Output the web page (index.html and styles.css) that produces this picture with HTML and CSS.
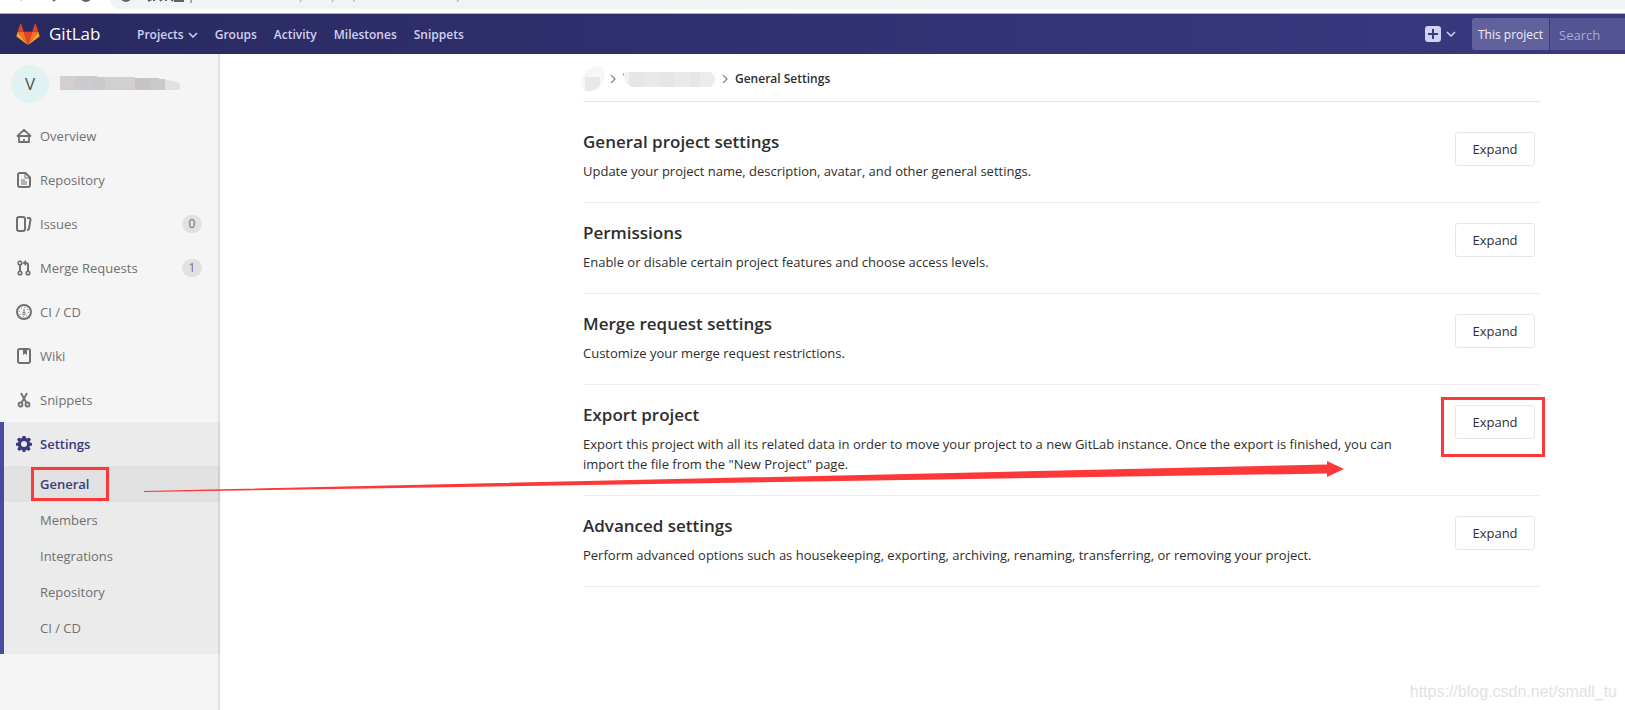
FILE: index.html
```
<!DOCTYPE html>
<html lang="en">
<head>
<meta charset="utf-8">
<title>General Settings · GitLab</title>
<link rel="stylesheet" href="styles.css">
</head>
<body>
<div class="browser-strip" aria-hidden="true">
  <svg class="strip-icons" width="110" height="9" viewBox="0 0 110 9"><path d="M18-4l4 4M53 1l4-3" stroke="#5f6368" stroke-width="2" fill="none"/><circle cx="86" cy="-4" r="5" stroke="#5f6368" stroke-width="2" fill="none"/></svg>
  <div class="address-bar">
    <svg width="400" height="9" viewBox="0 0 400 9" fill="none" stroke="#5f6368"><circle cx="16" cy="-4" r="5" stroke-width="2"/><path d="M38 1l4-2M44-2v3M50 1l3-3M56-2v3M60-2l3 3M64 1h10" stroke-width="2"/><path d="M81-1v4"/><path d="M190 2l2-3M222 2l2-3M244-1v3M347 2l2-3" stroke="#9aa0a6"/></svg>
  </div>
</div>
<header class="navbar">
  <a class="brand" href="#">
    <svg width="24" height="22" viewBox="0 0 36 34"><path fill="#e24329" d="M18 34l6.600-20.400H11.400z"/><path fill="#fc6d26" d="M18 34l-6.600-20.400H2.100z"/><path fill="#fca326" d="M2.100 13.600l-2 6.200a1.400 1.400 0 0 0 .5 1.500L18 34z"/><path fill="#e24329" d="M2.100 13.600h9.300l-4-12.300c-.2-.7-1.100-.7-1.300 0z"/><path fill="#fc6d26" d="M18 34l6.600-20.400h9.300z"/><path fill="#fca326" d="M33.900 13.600l2 6.200a1.400 1.400 0 0 1-.5 1.500L18 34z"/><path fill="#e24329" d="M33.900 13.600h-9.300l4-12.300c.2-.7 1.100-.7 1.300 0z"/></svg>
    <span>GitLab</span>
  </a>
  <nav class="main-nav">
    <a href="#">Projects <svg class="chevron" width="10" height="6" viewBox="0 0 10 6"><path d="M1 1l4 4 4-4"/></svg></a>
    <a href="#">Groups</a>
    <a href="#">Activity</a>
    <a href="#">Milestones</a>
    <a href="#">Snippets</a>
  </nav>
  <button class="new-button" type="button" aria-label="New">
    <svg width="16" height="16" viewBox="0 0 16 16"><rect width="16" height="16" rx="3" fill="#d1d1f0"/><path d="M8 3v10M3 8h10" stroke="#393982" stroke-width="2"/></svg>
    <svg class="chevron" width="10" height="6" viewBox="0 0 10 6"><path d="M1 1l4 4 4-4"/></svg>
  </button>
  <form class="search">
    <label class="search-scope" for="search">This project</label>
    <input id="search" type="text" placeholder="Search">
  </form>
</header>
<div class="layout">
  <aside class="sidebar">
    <a class="project" href="#" aria-label="Project">
      <span class="avatar">V</span>
      <svg width="134" height="24" viewBox="2 0 134 24"><path fill="#f0f4f4" d="M0 4h13v18h30v-4H13z"/><path fill="#d4cfcc" d="M13 4h15v14H13z"/><path fill="#ccccd0" d="M28 4h15v14H28z"/><path fill="#cacaca" d="M43 4h7v1h8v13H43z"/><path fill="#d0d0d0" d="M58 5h30v13H58z"/><path fill="#c8c2c2" d="M88 6h15v12H88z"/><path fill="#c9c9c9" d="M103 6h9v1h6v11h-15z"/><path fill="#e1e1e4" d="M118 8l10 1 5 3v6h-15z"/></svg>
    </a>
    <nav class="side-nav">
      <a href="#"><svg viewBox="0 0 16 16"><path d="M1.500 8L8 1.800 14.500 8zM3 8v6h10V8M8 11v2" fill="none" stroke="currentColor" stroke-width="1.800" stroke-linejoin="round"/></svg>Overview</a>
      <a href="#"><svg viewBox="0 0 16 16"><path d="M4 1h5.500L14 5.500V13a2 2 0 0 1-2 2H4a2 2 0 0 1-2-2V3a2 2 0 0 1 2-2z" fill="none" stroke="currentColor" stroke-width="2"/><path d="M9 1v5h5M5 8h4M5 10h6M5 12h6" fill="none" stroke="currentColor"/></svg>Repository</a>
      <a href="#"><svg viewBox="0 0 16 16"><rect x="1" y="1" width="8" height="14" rx="2" fill="none" stroke="currentColor" stroke-width="2"/><path d="M11 2h2c1 0 1.700.8 1.500 1.800L13 12.500c-.2 1-.8 1.500-2 1.500" fill="none" stroke="currentColor" stroke-width="2"/></svg>Issues<span class="badge">0</span></a>
      <a href="#"><svg viewBox="0 0 16 16" fill="none" stroke="currentColor"><circle cx="4" cy="3" r="1.800" stroke-width="1.600"/><circle cx="4" cy="13" r="1.800" stroke-width="1.600"/><circle cx="12" cy="13" r="1.800" stroke-width="1.600"/><path d="M4 5v6M12 11V5c0-1.500-.6-2-2-2H8.500" stroke-width="2"/><path d="M10 0v6L6.500 3z" fill="currentColor" stroke="none"/></svg>Merge Requests<span class="badge">1</span></a>
      <a href="#"><svg viewBox="0 0 16 16" fill="none" stroke="currentColor"><circle cx="8" cy="8" r="7" stroke-width="2"/><circle cx="8" cy="8" r="4.500" stroke-dasharray="1 2.500"/><path d="M8 5v4"/><circle cx="8" cy="9.500" r="1.300"/></svg>CI / CD</a>
      <a href="#"><svg viewBox="0 0 16 16"><rect x="2" y="1" width="12" height="14" rx="2" fill="none" stroke="currentColor" stroke-width="2"/><path d="M7 1h4v6L9 5.500 7 7z" fill="currentColor"/></svg>Wiki</a>
      <a href="#"><svg viewBox="0 0 16 16" fill="none" stroke="currentColor" stroke-width="1.800"><circle cx="4.500" cy="12.500" r="2"/><circle cx="11.500" cy="12.500" r="2"/><path d="M5 1l5.500 10M11 1L5.500 11"/></svg>Snippets</a>
      <div class="active-group">
        <a class="current" href="#"><svg viewBox="0 0 16 16"><path fill="currentColor" fill-rule="evenodd" d="M6.500 0h3l.4 2.100 1.200.5L13 1.500 15 3.600 13.500 5.400l.4 1.100 2.100.4v2.700l-2.100.5-.5 1.100 1.300 1.800-2.100 2-1.800-1.200-1.100.4L9.300 16H6.700l-.5-1.900-1.100-.4L3.300 15l-2-2 1.200-1.800-.4-1.100L0 9.600V6.900l2.100-.4.400-1.100L1 3.600l2-2.100 1.900 1.100 1.200-.5zM8 5a3 3 0 1 0 0 6 3 3 0 0 0 0-6z"/></svg>Settings</a>
        <div class="sub-nav">
          <a class="selected" href="#"><span>General</span></a>
          <a href="#">Members</a>
          <a href="#">Integrations</a>
          <a href="#">Repository</a>
          <a href="#">CI / CD</a>
        </div>
      </div>
    </nav>
  </aside>
  <main class="content">
    <nav class="breadcrumb" aria-label="Breadcrumb">
      <svg class="group-name" width="20" height="26" viewBox="2 0 20 26"><path fill="#f7f7f7" d="M0 13L6 4 15 0h7l2 5-1 10-6 8-11 3-5-4z"/><path fill="#e7e8e8" d="M4 11h15v9l-8 5H6l-2-2z"/></svg>
      <svg class="sep" width="6" height="8" viewBox="0 0 6 8"><path d="M1 0l4 4-4 4"/></svg>
      <svg width="92" height="16" viewBox="0 0 92 16"><path stroke="#999" d="M0 2l1 3"/><path fill="#f0f2f2" d="M2 1h5v14L3 12 1 7z"/><path fill="#e6e6e7" d="M6 1h15v15H8l-2-2z"/><path fill="#e9e9ec" d="M21 1h15v15H21zM51 1h16v15H51z"/><path fill="#e6e6e6" d="M36 1h15v15H36zM67 1h10v15H67z"/><path fill="#ebecee" d="M77 1h11l4 5v4l-4 6H77z"/></svg>
      <svg class="sep" width="6" height="8" viewBox="0 0 6 8"><path d="M1 0l4 4-4 4"/></svg>
      <strong>General Settings</strong>
    </nav>
    <section class="setting">
      <div class="setting-text"><h4>General project settings</h4><p>Update your project name, description, avatar, and other general settings.</p></div>
      <button class="expand" type="button">Expand</button>
    </section>
    <section class="setting">
      <div class="setting-text"><h4>Permissions</h4><p>Enable or disable certain project features and choose access levels.</p></div>
      <button class="expand" type="button">Expand</button>
    </section>
    <section class="setting">
      <div class="setting-text"><h4>Merge request settings</h4><p>Customize your merge request restrictions.</p></div>
      <button class="expand" type="button">Expand</button>
    </section>
    <section class="setting">
      <div class="setting-text"><h4>Export project</h4><p>Export this project with all its related data in order to move your project to a new GitLab instance. Once the export is finished, you can import the file from the "New Project" page.</p></div>
      <div class="marked"><button class="expand" type="button">Expand</button></div>
    </section>
    <section class="setting">
      <div class="setting-text"><h4>Advanced settings</h4><p>Perform advanced options such as housekeeping, exporting, archiving, renaming, transferring, or removing your project.</p></div>
      <button class="expand" type="button">Expand</button>
    </section>
  </main>
</div>
<svg class="arrow" width="1200" height="32" viewBox="0 0 1200 32" aria-hidden="true"><path fill="#fc3838" d="M0 30L1183 3.500V0l17 8-17 8v-3.500L0 31z"/></svg>
<div class="watermark">https://blog.csdn.net/small_tu</div>
</body>
</html>
```
FILE: styles.css
```
* { box-sizing: border-box; }
body {
  margin: 0;
  min-height: 100vh;
  display: flex;
  flex-direction: column;
  position: relative;
  background: #fff;
  color: #2e2e2e;
  font: 13px/20px "Open Sans", "Noto Sans", sans-serif;
  overflow-x: hidden;
}
a { color: inherit; text-decoration: none; }
button, input { font: inherit; }

.browser-strip {
  display: flex;
  height: 14px;
  border-bottom: 1px solid #b0b0b4;
}
.address-bar {
  flex: 1;
  height: 9px;
  background: #f1f3f4;
  border-bottom-left-radius: 12px;
}
.address-bar svg, .strip-icons { display: block; }

.navbar {
  display: flex;
  align-items: center;
  height: 40px;
  padding-left: 16px;
  background: linear-gradient(to right, #292961, #393982);
  color: #d1d1f0;
}
.brand {
  display: flex;
  align-items: center;
  gap: 9px;
  width: 121px;
  color: #fff;
  font-size: 17px;
}
.main-nav {
  display: flex;
  gap: 17px;
  flex: 1;
  padding-top: 2px;
  font-size: 12px;
  font-weight: 600;
}
.main-nav a {
  display: flex;
  align-items: center;
  gap: 4px;
  white-space: nowrap;
}
.chevron path {
  fill: none;
  stroke: #d1d1f0;
  stroke-width: 1.5;
}
.new-button {
  display: flex;
  align-items: center;
  gap: 5px;
  margin-right: 16px;
  padding: 0;
  border: 0;
  background: none;
}
.search {
  display: flex;
  height: 32px;
  width: 153px;
  color: #d1d1f0;
}
.search-scope {
  width: 77px;
  line-height: 34px;
  text-align: center;
  font-size: 12px;
  color: #f0f0fc;
  background: #61619b;
  border-radius: 3px 0 0 3px;
}
.search input {
  flex: 1;
  min-width: 0;
  margin-left: 1px;
  padding: 2px 9px 0;
  border: 0;
  background: #545494;
  color: #fff;
}
.search input::placeholder { color: #a9a9d4; opacity: 1; }

.layout { display: flex; flex: 1; }
.sidebar {
  width: 220px;
  flex: none;
  background: #f5f5f5;
  box-shadow: inset -2px 0 0 #e1e1e1;
  color: #707070;
}
.project {
  display: flex;
  align-items: center;
  height: 60px;
  padding-left: 11px;
}
.avatar {
  width: 38px;
  height: 38px;
  line-height: 38px;
  border-radius: 50%;
  background: #e0f2f1;
  color: #555;
  text-align: center;
  font-size: 17px;
}
.side-nav a {
  display: flex;
  align-items: center;
  height: 44px;
  padding: 0 18px 0 16px;
}
.side-nav a > svg { width: 16px; height: 16px; margin-right: 8px; }
.badge {
  width: 20px;
  height: 18px;
  margin-left: auto;
  border-radius: 9px;
  background: #e1e1e1;
  line-height: 18px;
  font-size: 12px;
  text-align: center;
}
.active-group {
  padding-bottom: 8px;
  background: rgba(0, 0, 0, .04);
  box-shadow: inset 4px 0 0 #4b4ba3;
}
.side-nav .current { color: #393982; font-weight: 600; }
.sub-nav a { height: 36px; padding-left: 40px; }
.sub-nav .selected {
  background: rgba(0, 0, 0, .04);
  color: #393982;
  font-weight: 600;
}
.selected span {
  min-width: 60px;
  line-height: 16px;
  outline: 3px solid #fc3838;
  outline-offset: 6px;
}

.content { flex: 1; min-width: 0; padding: 0 84px 0 363px; }
.breadcrumb {
  display: flex;
  align-items: center;
  gap: 7px;
  height: 48px;
  margin-bottom: 10px;
  padding-top: 2px;
  border-bottom: 1px solid #e5e5e5;
  font-size: 12px;
}
.breadcrumb strong { font-weight: 600; }
.group-name { overflow: visible; }
.sep path { fill: none; stroke: #888; stroke-width: 1.3; }
.setting {
  display: flex;
  justify-content: space-between;
  align-items: flex-start;
  padding: 18px 6px 21px 0;
  border-bottom: 1px solid #eee;
}
.setting-text { max-width: 840px; }
h4 { margin: 0 0 7px; font-size: 17px; line-height: 24px; font-weight: 600; }
p { margin: 0; }
.expand {
  width: 80px;
  height: 34px;
  margin-top: 2px;
  border: 1px solid #e5e5e5;
  border-radius: 3px;
  background: #fff;
  color: #2e2e2e;
}
.marked { position: relative; }
.marked::after {
  content: "";
  position: absolute;
  inset: -6px -10px -18px -14px;
  border: 3px solid #fc3838;
}
.arrow { position: absolute; left: 144px; top: 461px; }
.watermark {
  position: absolute;
  right: 8px;
  bottom: 8px;
  color: #e2e2e2;
  font: 16px/20px "Liberation Sans", Arial, sans-serif;
}
```
